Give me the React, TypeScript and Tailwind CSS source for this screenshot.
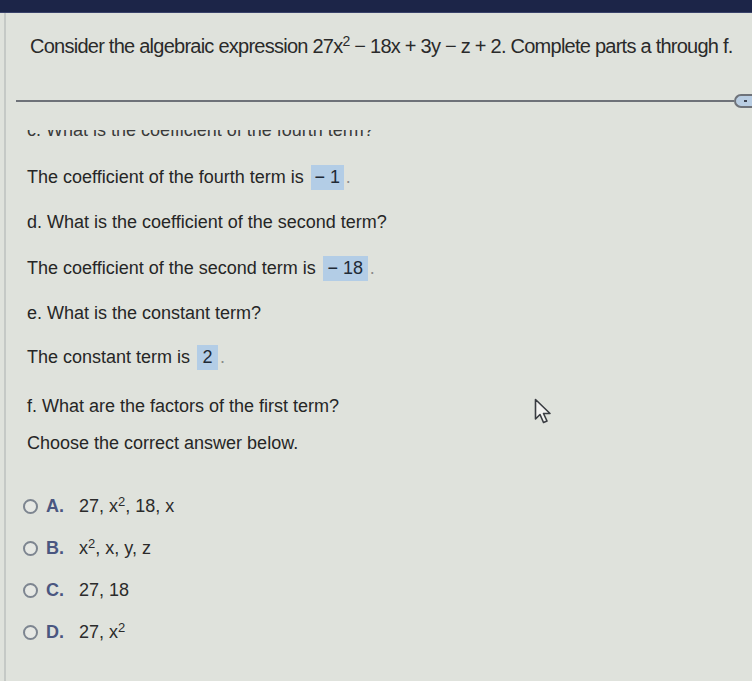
import React from "react";

const sans = { fontFamily: '"Liberation Sans", Arial, sans-serif' };

function AnswerBox({ children, w }: { children: React.ReactNode; w: string }) {
  return (
    <span className={`inline-flex h-[25px] ${w} items-center justify-center bg-[#b3cde6] text-[#1f2a36] ml-[7px]`}>
      {children}
    </span>
  );
}

function Radio({ label, children }: { label: string; children: React.ReactNode }) {
  return (
    <div className="flex h-9 items-center">
      <span className="h-[15px] w-[15px] rounded-full border-2 border-[#7d8590] bg-[#e6e8e4]" />
      <span className="ml-[8px] w-[33px] font-bold text-[#4a5680]">{label}</span>
      <span className="text-[#2b2b2b]">{children}</span>
    </div>
  );
}

export default function App() {
  return (
    <div className="relative h-[681px] w-[752px] overflow-hidden bg-[#dfe2dc] text-[18px] leading-[20px] text-[#262626]" style={sans}>
      <div className="h-[13px] bg-[#1c2548] border-b border-[#39426a]" />
      <div className="flex h-[668px] border-l-[2px] border-[#c5c9c6] ml-[4px]">
        <div className="flex w-full flex-col">
          {/* header */}
          <div className="flex h-[81px] items-start pl-[24px] pt-[23px]">
            <p className="whitespace-nowrap text-[20px] tracking-[-0.75px] text-[#2a2a2a]">
              Consider the algebraic expression{" "}
              <span>
                27x<sup className="text-[14px]">2</sup> − 18x + 3y − z + 2
              </span>
              . Complete parts a through f.
            </p>
          </div>

          {/* divider with handle */}
          <div className="flex items-center">
            <div className="ml-[10px] h-[2px] flex-1 bg-[#6e7279]" />
            <div className="flex h-[14px] w-[18px] items-center rounded-l-[7px] border-2 border-r-0 border-[#6e7279] bg-[#b9cde2] pl-[8px]">
              <span className="h-[2px] w-[3px] bg-[#3d4350]" />
            </div>
          </div>

          <div className="flex flex-col pl-[21px]">
            {/* cut-off part c */}
            <div className="mt-[22px] h-[10px] overflow-hidden">
              <p className="mt-[-10px] whitespace-nowrap text-[#3a3a3a]">c. What is the coefficient of the fourth term?</p>
            </div>

            <div className="mt-[19px] flex h-9 items-center">
              The coefficient of the fourth term is
              <AnswerBox w="w-[33px]">− 1</AnswerBox>
              <span className="ml-[2px] text-[#8a8a8a]">.</span>
            </div>
            <div className="mt-[9px] flex h-9 items-center">d. What is the coefficient of the second term?</div>
            <div className="mt-[10px] flex h-9 items-center">
              The coefficient of the second term is
              <AnswerBox w="w-[45px]">− 18</AnswerBox>
              <span className="ml-[2px] text-[#8a8a8a]">.</span>
            </div>
            <div className="mt-[9px] flex h-9 items-center">e. What is the constant term?</div>
            <div className="mt-[8px] flex h-9 items-center">
              The constant term is
              <AnswerBox w="w-[21px]">2</AnswerBox>
              <span className="ml-[2px] text-[#8a8a8a]">.</span>
            </div>
            <div className="mt-[13px] flex h-9 items-center">f. What are the factors of the first term?</div>
            <div className="mt-[1px] flex h-9 items-center">Choose the correct answer below.</div>

            <div className="mt-[27px] ml-[-4px] flex flex-col gap-[6px]">
              <Radio label="A.">
                27, x<sup className="text-[13px]">2</sup>, 18, x
              </Radio>
              <Radio label="B.">
                x<sup className="text-[13px]">2</sup>, x, y, z
              </Radio>
              <Radio label="C.">27, 18</Radio>
              <Radio label="D.">
                27, x<sup className="text-[13px]">2</sup>
              </Radio>
            </div>
          </div>
        </div>
      </div>

      {/* mouse cursor */}
      <svg className="absolute left-[534px] top-[398px]" width="18" height="28" viewBox="0 0 18 28">
        <path
          d="M1.5 1.5 L1.5 21 L6 16.5 L9.5 24.5 L13 23 L9.5 15.5 L16 15.5 Z"
          fill="#f2f2f0"
          stroke="#3a3d42"
          strokeWidth="1.6"
          strokeLinejoin="round"
        />
      </svg>
    </div>
  );
}
